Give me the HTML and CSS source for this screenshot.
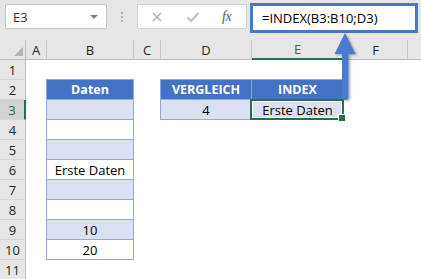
FILE: index.html
```html
<!DOCTYPE html>
<html>
<head>
<meta charset="utf-8">
<link rel="stylesheet" href="styles.css">
</head>
<body>
<div class="app">
  <div class="topbar">
    <div class="namebox"><span>E3</span><span class="dd"></span></div>
    <div class="dots"><i></i><i></i><i></i></div>
    <div class="btns">
      <svg class="ic-x" width="12" height="12" viewBox="0 0 12 12"><path d="M2 2 L10 10 M10 2 L2 10" stroke="#b3b3b3" stroke-width="1.4" fill="none"/></svg>
      <svg class="ic-ok" width="14" height="12" viewBox="0 0 14 12"><path d="M1.5 6.5 L5 10 L12.5 2" stroke="#c2c2c2" stroke-width="2.2" fill="none"/></svg>
      <span class="fx">fx</span>
    </div>
    <div class="formula">=INDEX(B3:B10;D3)</div>
  </div>
  <div class="colhdrs">
    <div class="ch corner"><span class="tri"></span></div>
    <div class="ch w-a">A</div>
    <div class="ch w-b">B</div>
    <div class="ch w-c">C</div>
    <div class="ch w-d">D</div>
    <div class="ch w-e sel">E</div>
    <div class="ch w-f">F</div>
    <div class="ch w-g"></div>
  </div>
  <div class="body">
    <div class="rowhdrs">
      <div class="rh">1</div>
      <div class="rh">2</div>
      <div class="rh sel">3</div>
      <div class="rh">4</div>
      <div class="rh">5</div>
      <div class="rh">6</div>
      <div class="rh">7</div>
      <div class="rh">8</div>
      <div class="rh">9</div>
      <div class="rh">10</div>
      <div class="rh">11</div>
    </div>
    <div class="cells">
      <div class="daten">
        <div class="c head">Daten</div>
        <div class="c band"></div>
        <div class="c"></div>
        <div class="c band"></div>
        <div class="c">Erste Daten</div>
        <div class="c band"></div>
        <div class="c"></div>
        <div class="c band">10</div>
        <div class="c">20</div>
      </div>
      <div class="vtable">
        <div class="c head">VERGLEICH</div>
        <div class="c head">INDEX</div>
        <div class="c band">4</div>
        <div class="c band active">Erste Daten</div>
      </div>
    </div>
  </div>
  <svg class="arrow" width="30" height="74" viewBox="0 0 30 74">
    <defs>
      <filter id="sh" x="-50%" y="-20%" width="200%" height="140%">
        <feDropShadow dx="1.5" dy="1" stdDeviation="1.2" flood-color="#000" flood-opacity="0.35"/>
      </filter>
    </defs>
    <g filter="url(#sh)">
      <polygon points="11,1 0.5,22 21.5,22" fill="#4a7bcf"/>
      <rect x="8" y="20" width="6.5" height="48" rx="3" fill="#4a7bcf"/>
    </g>
  </svg>
</div>
</body>
</html>
```

FILE: styles.css
```css
* { box-sizing: border-box; }
html, body { margin: 0; padding: 0; }
body {
  width: 421px;
  height: 279px;
  overflow: hidden;
  background: #fff;
  font-family: "Open Sans", "Liberation Sans", sans-serif;
  font-size: 13px;
  color: #000;
}
.app { position: relative; width: 421px; height: 279px; }

.topbar {
  height: 40px;
  background: #e6e6e6;
  display: flex;
  align-items: flex-start;
  padding-top: 4px;
}
.namebox {
  margin-left: 5px;
  width: 102px;
  height: 25px;
  background: #fff;
  border: 1px solid #c6c6c6;
  display: flex;
  align-items: center;
  justify-content: space-between;
  padding: 0 7px 0 7px;
  color: #333;
  font-size: 13px;
}
.dd {
  width: 0; height: 0;
  border-left: 4px solid transparent;
  border-right: 4px solid transparent;
  border-top: 4px solid #7a7a7a;
  margin-right: 1px;
}
.dots {
  width: 30px;
  height: 25px;
  display: flex;
  flex-direction: column;
  align-items: center;
  gap: 2px;
  padding-top: 8px;
}
.dots i { display: block; width: 2px; height: 2px; background: #b0b0b0; }
.btns {
  width: 110px;
  height: 25px;
  background: #fff;
  border: 1px solid #d4d4d4;
  display: flex;
  align-items: center;
  padding-left: 13px;
}
.ic-x { margin-right: 23px; }
.ic-ok { margin-right: 22px; }
.fx {
  font-family: "Liberation Serif", serif;
  font-style: italic;
  font-size: 14px;
  color: #606060;
  letter-spacing: -0.5px;
}
.formula {
  margin-left: 3px;
  margin-top: -1px;
  width: 168px;
  height: 30px;
  background: #fff;
  border: 3px solid #4a78c8;
  padding-left: 9px;
  display: flex;
  align-items: center;
  font-size: 13px;
  color: #000;
}

.colhdrs { display: flex; height: 20px; }
.ch {
  height: 20px;
  background: #e6e6e6;
  border-right: 1px solid #c6c6c6;
  border-bottom: 1px solid #bdbdbd;
  display: flex;
  align-items: center;
  justify-content: center;
  color: #262626;
  font-size: 13px;
}
.corner { width: 26px; border-right-color: #bdbdbd; position: relative; }
.tri {
  position: absolute;
  right: 2px;
  bottom: 3px;
  width: 0; height: 0;
  border-left: 9px solid transparent;
  border-bottom: 9px solid #b4b4b4;
}
.w-a { width: 21px; }
.w-b { width: 87px; }
.w-c { width: 27px; }
.w-d { width: 91px; }
.w-e { width: 92px; }
.w-f { width: 64px; }
.w-g { width: 13px; border-right: none; }
.ch.sel {
  color: #217346;
  border-bottom: 2px solid #217346;
}

.body { display: flex; }
.rowhdrs { width: 26px; display: flex; flex-direction: column; }
.rh {
  height: 20px;
  background: #e6e6e6;
  border-right: 1px solid #bdbdbd;
  border-bottom: 1px solid #d6d6d6;
  display: flex;
  align-items: center;
  justify-content: center;
  color: #262626;
  font-size: 13px;
}
.rh.sel {
  background: #d2d2d2;
  color: #217346;
  border-right: 2px solid #217346;
}

.cells {
  display: grid;
  grid-template-columns: 21px 87px 27px 91px 92px 64px 13px;
  grid-template-rows: repeat(11, 20px);
}
.daten {
  grid-column: 2;
  grid-row: 2 / span 9;
  margin: -1px 0 0 -1px;
  border-top: 1px solid #8ea9db;
  border-left: 1px solid #8ea9db;
  display: flex;
  flex-direction: column;
}
.c {
  height: 20px;
  border-right: 1px solid #8ea9db;
  border-bottom: 1px solid #8ea9db;
  display: flex;
  align-items: center;
  justify-content: center;
  background: #fff;
  font-size: 13px;
}
.c.band { background: #d9e1f2; }
.c.head {
  background: #4472c4;
  color: #fff;
  font-weight: 700;
  font-size: 12.5px;
}
.vtable {
  grid-column: 4 / span 2;
  grid-row: 2 / span 2;
  margin: -1px 0 0 -1px;
  border-top: 1px solid #8ea9db;
  border-left: 1px solid #8ea9db;
  display: grid;
  grid-template-columns: 91px 92px;
  grid-template-rows: 20px 20px;
}
.c.active { position: relative; }
.c.active::after {
  content: "";
  position: absolute;
  left: -2px;
  top: -1px;
  right: -1px;
  bottom: -1px;
  border: 2px solid #217346;
  box-shadow: inset 0 0 0 1px #fff;
}
.c.active::before {
  content: "";
  position: absolute;
  right: -3px;
  bottom: -3px;
  width: 6px;
  height: 6px;
  background: #217346;
  border: 1px solid #fff;
  z-index: 2;
}

.arrow {
  position: absolute;
  left: 334px;
  top: 32px;
}
```
